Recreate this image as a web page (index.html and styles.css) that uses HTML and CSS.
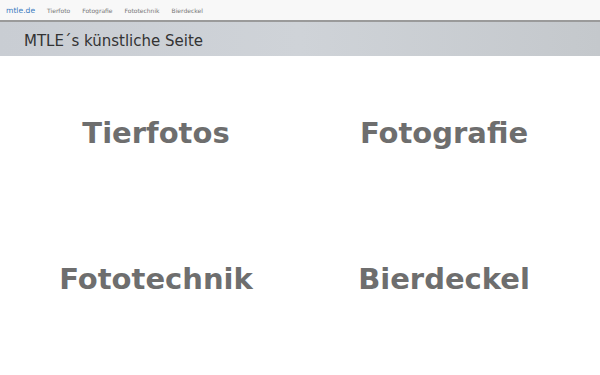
FILE: index.html
```html
<!DOCTYPE html>
<html lang="de">
<head>
  <meta charset="UTF-8">
  <meta name="viewport" content="width=device-width, initial-scale=1">
  <title>mtle.de</title>
  <link rel="stylesheet" href="styles.css">
</head>
<body>

  <nav class="navbar">
    <a class="brand" href="#">mtle.de</a>
    <a class="nav-link" href="#">Tierfoto</a>
    <a class="nav-link" href="#">Fotografie</a>
    <a class="nav-link" href="#">Fototechnik</a>
    <a class="nav-link" href="#">Bierdeckel</a>
  </nav>

  <header class="jumbo">
    <h1>MTLE´s künstliche Seite</h1>
  </header>

  <main class="tiles">
    <a class="tile" href="#">Tierfotos</a>
    <a class="tile" href="#">Fotografie</a>
    <a class="tile" href="#">Fototechnik</a>
    <a class="tile" href="#">Bierdeckel</a>
  </main>

</body>
</html>
```

FILE: styles.css
```css
body {
  margin: 0;
  font-family: 'DejaVu Sans', sans-serif;
  background-color: #fff;
  color: #333;
}
.navbar {
  display: flex;
  align-items: center;
  height: 20px;
  padding: 0 6px;
  background-color: #f8f8f8;
  border-bottom: 2px solid #9a9a9a;
}
.brand {
  font-size: 7.6px;
  color: #3a7bbf;
  text-decoration: none;
  margin-right: 12px;
}
.nav-link {
  font-size: 6px;
  color: #777;
  text-decoration: none;
  margin-right: 12px;
}
.jumbo {
  height: 34px;
  display: flex;
  align-items: center;
  padding: 0 24px;
  background: linear-gradient(90deg, #c9cdd3, #cfd3d8 50%, #c4c8cc);
}
.jumbo h1 {
  margin: 3px 0 0;
  font-size: 15px;
  font-weight: normal;
  color: #333;
}
.tiles {
  display: grid;
  grid-template-columns: 1fr 1fr;
  grid-auto-rows: 146px;
  padding: 4px 12px 0;
}
.tile {
  display: flex;
  align-items: center;
  justify-content: center;
  font-size: 29px;
  font-weight: bold;
  color: #6e6e6e;
  text-decoration: none;
}
```
